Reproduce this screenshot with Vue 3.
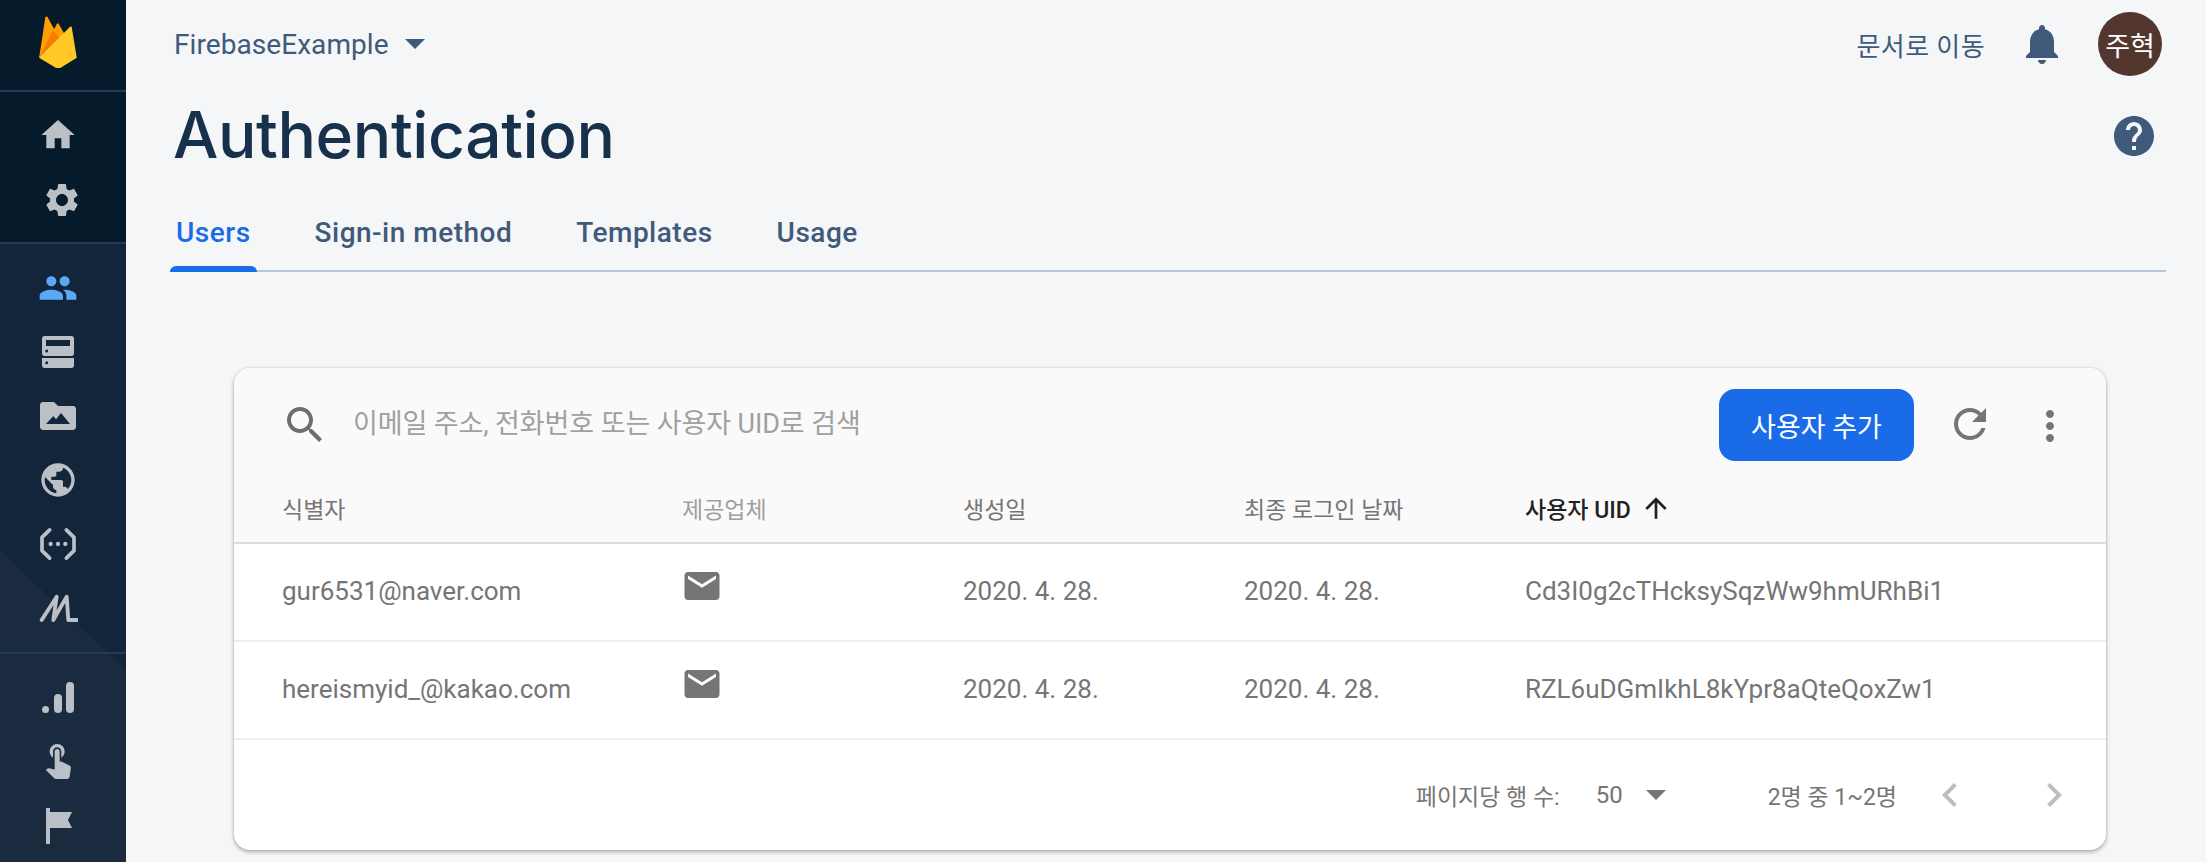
<script setup>
const rows = [
  { id: 'gur6531@naver.com', created: '2020. 4. 28.', last: '2020. 4. 28.', uid: 'Cd3I0g2cTHcksySqzWw9hmURhBi1' },
  { id: 'hereismyid_@kakao.com', created: '2020. 4. 28.', last: '2020. 4. 28.', uid: 'RZL6uDGmIkhL8kYpr8aQteQoxZw1' }
]
const tabs = ['Users', 'Sign-in method', 'Templates', 'Usage']
</script>

<template>
  <div class="page">
    <aside class="side">
      <div class="logo">
        <svg width="52" height="52" viewBox="0 0 24 24">
          <path fill="#FFA000" d="M3.3 19.3L11.45 3.7Q11.9 3 12.35 3.7L15.2 8.6Z" />
          <path fill="#FFA000" d="M3.3 19.3L6.15.55Q6.6-.1 7.1.4L12.4 10Z" />
          <path fill="#F57C00" d="M3.3 19.3L9.7 6.6L12.9 10.2Z" />
          <path fill="#FFCA28" d="M3.25 19.3L17.6 4.95Q18.1 4.6 18.35 5.2L20.65 19.3L12.9 24.1Q12.1 24.5 11.3 24.1Z" />
        </svg>
      </div>
      <div class="group top">
        <svg class="ic" viewBox="0 0 24 24"><path d="M10 20v-6h4v6h5v-8h3L12 3 2 12h3v8z" /></svg>
        <svg class="ic gear" viewBox="0 0 24 24"><path d="M19.14 12.94c.04-.3.06-.61.06-.94 0-.32-.02-.64-.07-.94l2.03-1.58c.18-.14.23-.41.12-.61l-1.92-3.32c-.12-.22-.37-.29-.59-.22l-2.39.96c-.5-.38-1.03-.7-1.62-.94l-.36-2.54c-.04-.24-.24-.41-.48-.41h-3.84c-.24 0-.43.17-.47.41l-.36 2.54c-.59.24-1.13.57-1.62.94l-2.39-.96c-.22-.08-.47 0-.59.22L2.74 8.87c-.12.21-.08.47.12.61l2.03 1.58c-.05.3-.09.63-.09.94s.02.64.07.94l-2.03 1.58c-.18.14-.23.41-.12.61l1.92 3.32c.12.22.37.29.59.22l2.39-.96c.5.38 1.03.7 1.62.94l.36 2.54c.05.24.24.41.48.41h3.84c.24 0 .44-.17.47-.41l.36-2.54c.59-.24 1.13-.56 1.62-.94l2.39.96c.22.08.47 0 .59-.22l1.92-3.32c.12-.22.07-.47-.12-.61l-2.01-1.58zM12 15.6c-1.98 0-3.6-1.62-3.6-3.6s1.62-3.6 3.6-3.6 3.6 1.62 3.6 3.6-1.62 3.6-3.6 3.6z" /></svg>
      </div>
      <div class="lower">
        <div class="group mid">
          <svg class="ic active" viewBox="0 0 24 24"><path d="M16 11c1.66 0 2.99-1.34 2.99-3S17.66 5 16 5c-1.66 0-3 1.34-3 3s1.34 3 3 3zm-8 0c1.66 0 2.99-1.34 2.99-3S9.66 5 8 5C6.34 5 5 6.34 5 8s1.34 3 3 3zm0 2c-2.33 0-7 1.17-7 3.5V19h14v-2.5c0-2.33-4.67-3.5-7-3.5zm8 0c-.29 0-.62.02-.97.05 1.16.84 1.97 1.97 1.97 3.45V19h6v-2.5c0-2.33-4.67-3.5-7-3.5z" /></svg>
          <svg class="ic" viewBox="0 0 24 24">
            <path fill-rule="evenodd" d="M4 2.4h16a1.6 1.6 0 0 1 1.6 1.6v8.8a1.6 1.6 0 0 1-1.6 1.6H4a1.6 1.6 0 0 1-1.6-1.6V4A1.6 1.6 0 0 1 4 2.4zM4.8 4.8v3.6h14.4V4.8zM5.2 10.5a.9.9 0 1 0 0 1.8.9.9 0 0 0 0-1.8z" />
            <path fill-rule="evenodd" d="M2.4 15.6h19.2v4.4a1.6 1.6 0 0 1-1.6 1.6H4a1.6 1.6 0 0 1-1.6-1.6zM5.2 17.5a.9.9 0 1 0 0 1.8.9.9 0 0 0 0-1.8z" />
          </svg>
          <svg class="ic" viewBox="0 0 24 24"><path fill-rule="evenodd" d="M3 3.6h6.6l2.4 2.4h9c1 0 1.8.8 1.8 1.8v10.8c0 1-.8 1.8-1.8 1.8H3c-1 0-1.8-.8-1.8-1.8V5.4c0-1 .8-1.8 1.8-1.8zM4.8 16.8h14.4l-5.4-6.6-3 3.8-1.6-2z" /></svg>
          <svg class="ic" viewBox="0 0 24 24"><path d="M12 2C6.48 2 2 6.48 2 12s4.48 10 10 10 10-4.48 10-10S17.52 2 12 2zm-1 17.93c-3.95-.49-7-3.85-7-7.93 0-.62.08-1.21.21-1.79L9 15v1c0 1.1.9 2 2 2v1.93zm6.9-2.54c-.26-.81-1-1.39-1.9-1.39h-1v-3c0-.55-.45-1-1-1H8v-2h2c.55 0 1-.45 1-1V7h2c1.1 0 2-.9 2-2v-.41c2.93 1.19 5 4.06 5 7.41 0 2.08-.8 3.97-2.1 5.39z" /></svg>
          <svg class="ic" viewBox="0 0 24 24">
            <path class="ln" d="M7 3.5L2.4 8v8L7 20.5M17 3.5L21.6 8v8L17 20.5" />
            <circle cx="7.6" cy="12" r="1.3" /><circle cx="12" cy="12" r="1.3" /><circle cx="16.4" cy="12" r="1.3" />
          </svg>
          <svg class="ic" viewBox="0 0 24 24"><path class="ln ml" d="M2.2 19.2L11.2 5.2L9.2 19.2L17.2 5.2L18.2 19.2H23.4" /></svg>
        </div>
        <div class="group bot">
          <svg class="ic" viewBox="0 0 24 24">
            <circle cx="4.5" cy="18.9" r="2.1" />
            <rect x="9.6" y="9.6" width="4.8" height="11.4" rx="2.4" />
            <rect x="16.8" y="2.4" width="4.8" height="18.6" rx="2.4" />
          </svg>
          <svg class="ic touch" viewBox="0 0 24 24"><path d="M9 11.24V7.5C9 6.12 10.12 5 11.5 5S14 6.12 14 7.5v3.74c1.21-.81 2-2.18 2-3.74C16 5.01 13.99 3 11.5 3S7 5.01 7 7.5c0 1.56.79 2.93 2 3.74zm9.84 4.63l-4.54-2.26c-.17-.07-.35-.11-.54-.11H13v-6c0-.83-.67-1.5-1.5-1.5S10 6.67 10 7.5v10.74l-3.43-.72c-.08-.01-.15-.03-.24-.03-.31 0-.59.13-.79.33l-.79.8 4.94 4.94c.27.27.65.44 1.06.44h6.79c.75 0 1.33-.55 1.44-1.28l.75-5.27c.01-.07.02-.14.02-.2 0-.62-.38-1.16-.91-1.38z" /></svg>
          <svg class="ic" viewBox="0 0 24 24"><path d="M4.8 1.2H7.2V3.6H20.4L18 8.4L20.4 13.2H7.2V22.8H4.8Z" /></svg>
        </div>
      </div>
    </aside>

    <main class="main">
      <header class="topbar">
        <div class="project">
          <span>FirebaseExample</span>
          <i class="caret"></i>
        </div>
        <div class="top-right">
          <span class="docs">문서로 이동</span>
          <svg class="bell" viewBox="0 0 24 24"><path d="M12 22c1.1 0 2-.9 2-2h-4c0 1.1.89 2 2 2zm6-6v-5c0-3.07-1.64-5.64-4.5-6.32V4c0-.83-.67-1.5-1.5-1.5s-1.5.67-1.5 1.5v.68C7.63 5.36 6 7.92 6 11v5l-2 2v1h16v-1l-2-2z" /></svg>
          <div class="avatar">주혁</div>
        </div>
      </header>

      <div class="title-row">
        <h1>Authentication</h1>
        <svg class="help" viewBox="0 0 24 24"><path d="M12 2C6.48 2 2 6.48 2 12s4.48 10 10 10 10-4.48 10-10S17.52 2 12 2zm1 17h-2v-2h2v2zm2.07-7.75l-.9.92C13.45 12.9 13 13.5 13 15h-2v-.5c0-1.1.45-2.1 1.17-2.83l1.24-1.26c.37-.36.59-.86.59-1.41 0-1.1-.9-2-2-2s-2 .9-2 2H8c0-2.21 1.79-4 4-4s4 1.79 4 4c0 .88-.36 1.68-.93 2.25z" /></svg>
      </div>

      <nav class="tabs">
        <a v-for="(t, i) in tabs" :key="t" class="tab" :class="{ on: i === 0 }">{{ t }}</a>
      </nav>

      <section class="card">
        <div class="toolbar">
          <svg class="i48 search" viewBox="0 0 24 24"><path d="M15.5 14h-.79l-.28-.27C15.41 12.59 16 11.11 16 9.5 16 5.91 13.09 3 9.5 3S3 5.91 3 9.5 5.91 16 9.5 16c1.61 0 3.09-.59 4.23-1.57l.27.28v.79l5 4.99L20.49 19l-4.99-5zm-6 0C7.01 14 5 11.99 5 9.5S7.01 5 9.5 5 14 7.01 14 9.5 11.99 14 9.5 14z" /></svg>
          <span class="placeholder">이메일 주소, 전화번호 또는 사용자 UID로 검색</span>
          <button class="add">사용자 추가</button>
          <svg class="i48 refresh" viewBox="0 0 24 24"><path d="M17.65 6.35C16.2 4.9 14.21 4 12 4c-4.42 0-7.99 3.58-7.99 8s3.57 8 7.99 8c3.73 0 6.84-2.55 7.73-6h-2.08c-.82 2.33-3.04 4-5.65 4-3.31 0-6-2.69-6-6s2.69-6 6-6c1.66 0 3.14.69 4.22 1.78L13 11h7V4l-2.35 2.35z" /></svg>
          <svg class="i48 more" viewBox="0 0 24 24"><path d="M12 8c1.1 0 2-.9 2-2s-.9-2-2-2-2 .9-2 2 .9 2 2 2zm0 2c-1.1 0-2 .9-2 2s.9 2 2 2 2-.9 2-2-.9-2-2-2zm0 6c-1.1 0-2 .9-2 2s.9 2 2 2 2-.9 2-2-.9-2-2-2z" /></svg>
        </div>

        <div class="grid head">
          <span>식별자</span>
          <span class="dim">제공업체</span>
          <span>생성일</span>
          <span>최종 로그인 날짜</span>
          <span class="sorted">사용자 UID
            <svg class="arrow" viewBox="0 0 24 24"><path d="M4 12l1.41 1.41L11 7.83V20h2V7.83l5.58 5.59L20 12l-8-8-8 8z" /></svg>
          </span>
        </div>

        <div v-for="r in rows" :key="r.uid" class="grid row">
          <span>{{ r.id }}</span>
          <span class="mail">
            <svg viewBox="0 0 24 24"><path d="M20 4H4c-1.1 0-1.99.9-1.99 2L2 18c0 1.1.9 2 2 2h16c1.1 0 2-.9 2-2V6c0-1.1-.9-2-2-2zm0 4l-8 5-8-5V6l8 5 8-5v2z" /></svg>
          </span>
          <span>{{ r.created }}</span>
          <span>{{ r.last }}</span>
          <span>{{ r.uid }}</span>
        </div>

        <footer class="pager">
          <span class="per">페이지당 행 수:</span>
          <span class="size">50</span>
          <i class="caret gray"></i>
          <span class="range">2명 중 1~2명</span>
          <svg class="i48 chev first" viewBox="0 0 24 24"><path d="M15.41 7.41L14 6l-6 6 6 6 1.41-1.41L10.83 12z" /></svg>
          <svg class="i48 chev second" viewBox="0 0 24 24"><path d="M10 6L8.59 7.41 13.17 12l-4.58 4.59L10 18l6-6z" /></svg>
        </footer>
      </section>
    </main>
  </div>
</template>

<style>
html, body { margin: 0; padding: 0; background: #f5f6f8; }
</style>

<style scoped>
.page {
  display: flex;
  width: 2206px;
  height: 862px;
  overflow: hidden;
  background: #f5f6f8;
  font-family: Roboto, "Noto Sans CJK KR", sans-serif;
}

/* sidebar */
.side {
  width: 126px;
  flex: none;
  display: flex;
  flex-direction: column;
  background: #051a2b;
}
.logo {
  height: 90px;
  box-sizing: border-box;
  padding: 16px 0 0 32px;
}
.logo svg { display: block; }
.group {
  display: flex;
  flex-direction: column;
  align-items: flex-start;
  padding-left: 38px;
  box-sizing: border-box;
}
.top {
  height: 154px;
  padding-top: 23px;
  border-top: 2px solid #253a55;
  border-bottom: 2px solid #253a55;
  gap: 25px;
}
.lower {
  position: relative;
  flex: 1;
  background: #13253a;
  overflow: hidden;
}
.lower::before {
  content: "";
  position: absolute;
  inset: 0;
  background: #1a2b3f;
  clip-path: polygon(0 306px, 126px 426px, 126px 100%, 0 100%);
}
.mid {
  position: relative;
  height: 410px;
  padding-top: 24px;
  border-bottom: 2px solid #253a55;
  gap: 24px;
}
.bot {
  position: relative;
  padding-top: 24px;
  gap: 24px;
}
.ic {
  width: 40px;
  height: 40px;
  flex: none;
  fill: #bbc0c7;
}
.ic.gear { margin-left: 4px; }
.ic.active { fill: #5aa9f8; }
.ic.touch { margin: -3px 0 3px; }
.ln {
  fill: none;
  stroke: #bbc0c7;
  stroke-width: 2.2;
  stroke-linejoin: round;
  stroke-linecap: round;
}
.ln.ml { stroke-width: 2.3; }

/* main */
.main {
  flex: 1;
  min-width: 0;
  box-sizing: border-box;
  padding: 0 40px 0 44px;
}
.topbar {
  height: 88px;
  display: flex;
  align-items: center;
  justify-content: space-between;
  padding: 0 4px 0 4px;
}
.project {
  display: flex;
  align-items: center;
  gap: 16px;
  font-size: 28px;
  letter-spacing: 0.07px;
  color: #3f5a7b;
}
.caret {
  width: 0;
  height: 0;
  border-left: 10px solid transparent;
  border-right: 10px solid transparent;
  border-top: 10px solid #3f5a7b;
}
.top-right {
  display: flex;
  align-items: center;
}
.docs {
  font-size: 26px;
  color: #3f5a7b;
  letter-spacing: 0.4px;
}
.bell {
  width: 48px;
  height: 48px;
  fill: #3f5a7b;
  margin-left: 33px;
}
.avatar {
  width: 64px;
  height: 64px;
  margin-left: 32px;
  border-radius: 50%;
  background: #53372e;
  color: #fff;
  font-size: 27px;
  display: flex;
  align-items: center;
  justify-content: center;
}
.title-row {
  height: 108px;
  display: flex;
  justify-content: space-between;
  padding: 0 8px 0 3px;
}
h1 {
  margin: 11px 0 0;
  font-family: Inter, Roboto, sans-serif;
  font-size: 64px;
  line-height: 72px;
  font-weight: 500;
  letter-spacing: -0.4px;
  color: #17304b;
}
.help {
  width: 48px;
  height: 48px;
  margin-top: 24px;
  fill: #3f5a7b;
}
.tabs {
  display: flex;
  gap: 52px;
  border-bottom: 2px solid #b5c7d8;
}
.tab {
  position: relative;
  padding: 19px 6px 19px;
  font-size: 28px;
  line-height: 36px;
  font-weight: 500;
  letter-spacing: 0.5px;
  color: #3f5a7b;
}
.tab.on { color: #1a6be8; }
.tab.on::after {
  content: "";
  position: absolute;
  left: 0;
  right: 0;
  bottom: -2px;
  height: 6px;
  border-radius: 6px 6px 0 0;
  background: #1a6be8;
}

/* card */
.card {
  margin: 96px 60px 0 64px;
  height: 482px;
  box-sizing: border-box;
  background: #fff;
  border-radius: 16px;
  box-shadow: 0 2px 4px rgba(60, 64, 67, 0.4), 0 0 2px rgba(60, 64, 67, 0.2);
  overflow: hidden;
}
.toolbar {
  height: 105px;
  box-sizing: border-box;
  background: #fafafa;
  display: flex;
  align-items: flex-start;
}
.i48 {
  width: 48px;
  height: 48px;
  flex: none;
}
.search {
  fill: #6e6e6e;
  margin: 33px 0 0 47px;
}
.placeholder {
  margin: 38px 0 0 24px;
  flex: 1;
  font-size: 27px;
  line-height: 36px;
  letter-spacing: -0.1px;
  color: #a0a0a0;
}
.add {
  margin: 21px 0 0;
  width: 195px;
  height: 72px;
  border: 0;
  border-radius: 16px;
  background: #1a6be8;
  color: #fff;
  font: inherit;
  font-size: 27px;
}
.refresh {
  fill: #757575;
  margin: 32px 0 0 32px;
}
.more {
  fill: #757575;
  margin: 34px 32px 0 32px;
}
.grid {
  display: grid;
  grid-template-columns: 400px 281px 281px 281px 1fr;
  align-items: center;
}
.grid > span { padding-left: 48px; }
.head {
  height: 71px;
  box-sizing: border-box;
  background: #fafafa;
  border-bottom: 2px solid #dcdcdc;
  font-size: 23px;
  color: #757575;
}
.dim { color: #9e9e9e; }
.sorted {
  display: flex;
  align-items: center;
  color: #212121;
  font-weight: 500;
}
.arrow {
  width: 32px;
  height: 32px;
  margin-left: 9px;
  fill: #212121;
}
.row {
  height: 98px;
  box-sizing: border-box;
  padding-bottom: 2px;
  border-bottom: 2px solid #eeeeee;
  font-size: 26px;
  color: #757575;
}
.mail {
  display: flex;
  height: 100%;
  align-items: center;
  padding-bottom: 10px;
  box-sizing: border-box;
}
.mail svg {
  width: 42px;
  height: 42px;
  margin-left: -1px;
  fill: #757575;
}
.pager {
  height: 109px;
  display: flex;
  align-items: center;
  font-size: 23px;
  color: #757575;
}
.per { margin-left: auto; }
.size { margin-left: 36px; font-size: 24px; }
.caret.gray { margin-left: 23px; border-top-color: #757575; }
.range { margin-left: 102px; }
.chev { fill: #bdbdbd; }
.first { margin-left: 29px; }
.second { margin: 0 28px 0 56px; }
</style>
